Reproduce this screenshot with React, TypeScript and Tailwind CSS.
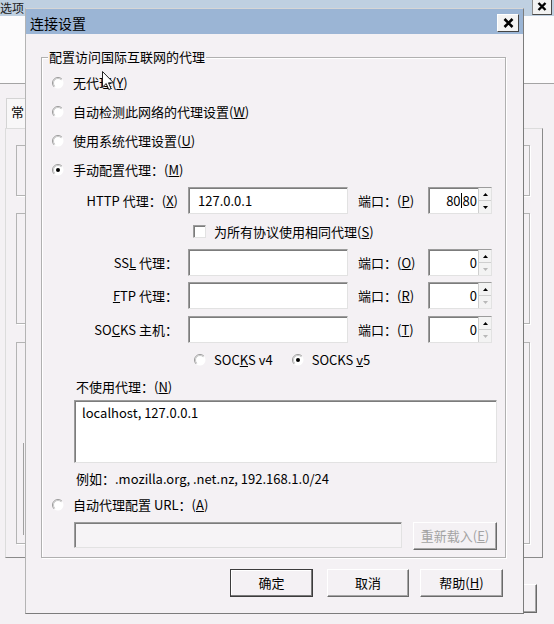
import React from 'react';

// Windows-classic style "连接设置" dialog over the "选项" window

const FONT = "font-['Noto_Sans_CJK_SC','Noto_Sans',sans-serif]";
const SUNKEN =
  'border border-t-[#9c9c9c] border-l-[#9c9c9c] border-r-[#e2e2e2] border-b-[#e2e2e2] shadow-[inset_1px_1px_0_#7c7c7c]';
const RAISED =
  'border border-t-[#ffffff] border-l-[#ffffff] border-r-[#6a6a6a] border-b-[#6a6a6a] shadow-[inset_-1px_-1px_0_#a6a6a6]';

function Radio({ checked }: { checked?: boolean }) {
  return (
    <svg width="12" height="12" viewBox="0 0 12 12" className="shrink-0">
      <circle cx="6" cy="6" r="5.5" fill="#ffffff" />
      <path d="M2.1 9.9 A5.5 5.5 0 0 1 9.9 2.1" stroke="#9a9a9a" strokeWidth="1" fill="none" />
      <path d="M2.8 9.2 A4.5 4.5 0 0 1 9.2 2.8" stroke="#c8c8c8" strokeWidth="1" fill="none" />
      {checked && <circle cx="6" cy="6" r="2" fill="#000000" />}
    </svg>
  );
}

function Checkbox() {
  return <span className={`inline-block w-[13px] h-[13px] bg-white ${SUNKEN} shrink-0`} />;
}

function Arrow({ up, gray }: { up?: boolean; gray?: boolean }) {
  return (
    <svg width="5" height="3" viewBox="0 0 5 3">
      <path d={up ? 'M0 3 L2.5 0 L5 3 Z' : 'M0 0 L2.5 3 L5 0 Z'} fill={gray ? '#b8b8b8' : '#000000'} />
    </svg>
  );
}

function Spin({ children, downGray }: { children: React.ReactNode; downGray?: boolean }) {
  return (
    <div className={`flex w-[64px] h-[27px] bg-white ${SUNKEN}`}>
      <div className="flex-1 flex items-center justify-end pr-[1px] leading-[16px]">{children}</div>
      <div className="flex flex-col w-[13px] border-l border-[#cfcfcf]">
        <div className="flex-1 flex items-center justify-center bg-[#f3f3f3] border-b border-[#cfcfcf]">
          <Arrow up />
        </div>
        <div className="flex-1 flex items-center justify-center bg-[#f3f3f3]">
          <Arrow gray={downGray} />
        </div>
      </div>
    </div>
  );
}

function ProxyRow({
  label,
  value,
  port,
  spin,
  className,
}: {
  label: React.ReactNode;
  value?: string;
  port: React.ReactNode;
  spin: React.ReactNode;
  className?: string;
}) {
  return (
    <div className={`flex items-center h-[27px] ${className ?? ''}`}>
      <div className="w-[136px] text-right leading-[16px]">{label}</div>
      <div className={`ml-[10px] w-[160px] h-[27px] bg-white flex items-center pl-[9px] leading-[16px] ${SUNKEN}`}>
        {value}
      </div>
      <div className="ml-[10px] w-[60px] leading-[16px]">{port}</div>
      <div className="ml-[10px]">{spin}</div>
    </div>
  );
}

function Button({ children, isDefault, className }: { children: React.ReactNode; isDefault?: boolean; className?: string }) {
  return (
    <div
      className={`h-[28px] flex items-center justify-center leading-[16px] bg-[#f4f1f4] ${
        isDefault
          ? 'border border-[#3c3c3c] shadow-[inset_-1px_-1px_0_#7a7a7a,inset_1px_1px_0_#ffffff]'
          : RAISED
      } ${className ?? ''}`}
    >
      {children}
    </div>
  );
}

export default function App() {
  return (
    <div className={`relative w-[554px] h-[624px] overflow-hidden bg-[#f4f1f4] text-[13px] text-black ${FONT}`}>
      {/* background window: 选项 */}
      <div className="absolute left-0 top-0 w-[554px] h-[16px] bg-[#bfd0e1]" />
      <span className="absolute left-0 top-[1px] text-[12px] leading-[14px] text-[#1a1a1a]">选项</span>
      <div className="absolute left-[532px] top-[-3px] w-[20px] h-[18px] bg-[#f2f2f2] border border-[#8c8c8c] border-r-[#4a4a4a] border-b-[#4a4a4a] flex items-center justify-center">
        <svg width="10" height="9" viewBox="0 0 10 9">
          <path d="M1.5 1 L8.5 8 M8.5 1 L1.5 8" stroke="#000" strokeWidth="2.4" />
        </svg>
      </div>
      <div className="absolute left-0 top-[16px] w-[554px] h-[68px] bg-[#fcfbfc] border-b border-[#a4a4a4]" />
      <div className="absolute left-[6px] top-[98px] w-[40px] h-[31px] border-l border-t border-[#d4d4d4] bg-[#f8f7f8]" />
      <span className="absolute left-[11px] top-[103px] leading-[18px]">常</span>
      <div className="absolute left-[5px] top-[128px] w-[538px] h-[430px] border border-[#dcdcdc] border-r-[#8a8a8a] border-b-[#8a8a8a]" />
      <div className="absolute left-[16px] top-[145px] w-[514px] h-[51px] border border-[#b4b4b4] shadow-[1px_1px_0_#ffffff]" />
      <div className="absolute left-[16px] top-[213px] w-[514px] h-[111px] border border-[#b4b4b4] shadow-[1px_1px_0_#ffffff]" />
      <div className="absolute left-[16px] top-[342px] w-[514px] h-[202px] border border-[#b4b4b4] shadow-[1px_1px_0_#ffffff]" />
      <div className="absolute left-[23px] top-[443px] w-px h-[92px] bg-[#a0a0a0]" />
      <div className={`absolute left-[440px] top-[584px] w-[97px] h-[29px] ${RAISED}`} />

      {/* dialog: 连接设置 */}
      <div className="absolute left-[25px] top-[8px] w-[499px] h-[606px] flex flex-col bg-[#f4f1f4] border border-t-[#d6d6d6] border-l-[#b4b4b4] border-r-[#7c7c7c] border-b-[#7c7c7c]">
        <div className="h-[25px] shrink-0 bg-[#9bb5d5] flex items-center justify-between pt-[2px] pl-[4px] pr-[4px]">
          <span className="text-[14px] leading-[18px]">连接设置</span>
          <div className="w-[22px] h-[18px] bg-[#f3f3f3] border border-t-[#ffffff] border-l-[#ffffff] border-r-[#444444] border-b-[#444444] flex items-center justify-center">
            <svg width="11" height="10" viewBox="0 0 11 10">
              <path d="M1.5 1 L9.5 9 M9.5 1 L1.5 9" stroke="#000" strokeWidth="2.6" />
            </svg>
          </div>
        </div>

        <div className="relative ml-[15px] mt-[23px] w-[465px] h-[501px] shrink-0 border border-[#b0b0b0] shadow-[inset_1px_1px_0_#ffffff,1px_1px_0_#ffffff] flex flex-col pt-[10px]">
          <span className="absolute left-[6px] top-[-9px] px-[1px] bg-[#f4f1f4] leading-[16px]">配置访问国际互联网的代理</span>

          <div className="flex items-center h-[29px] pl-[10px] gap-[9px] leading-[16px]">
            <Radio />
            <span>
              无代理(<u>Y</u>)
            </span>
          </div>
          <div className="flex items-center h-[29px] pl-[10px] gap-[9px] leading-[16px]">
            <Radio />
            <span>
              自动检测此网络的代理设置(<u>W</u>)
            </span>
          </div>
          <div className="flex items-center h-[29px] pl-[10px] gap-[9px] leading-[16px]">
            <Radio />
            <span>
              使用系统代理设置(<u>U</u>)
            </span>
          </div>
          <div className="flex items-center h-[29px] pl-[10px] gap-[9px] leading-[16px]">
            <Radio checked />
            <span>
              手动配置代理：(<u>M</u>)
            </span>
          </div>

          <ProxyRow
            className="mt-[3px]"
            label={
              <>
                HTTP 代理：(<u>X</u>)
              </>
            }
            value="127.0.0.1"
            port={
              <>
                端口：(<u>P</u>)
              </>
            }
            spin={
              <Spin>
                80
                <span className="inline-block w-px h-[15px] bg-black mx-[0.5px]" />
                80
              </Spin>
            }
          />

          <div className="flex items-center h-[35px] pl-[151px] gap-[8px] leading-[16px]">
            <Checkbox />
            <span>
              为所有协议使用相同代理(<u>S</u>)
            </span>
          </div>

          <ProxyRow
            label={
              <>
                SS<u>L</u> 代理：
              </>
            }
            port={
              <>
                端口：(<u>O</u>)
              </>
            }
            spin={<Spin downGray>0</Spin>}
          />
          <ProxyRow
            className="mt-[6px]"
            label={
              <>
                <u>F</u>TP 代理：
              </>
            }
            port={
              <>
                端口：(<u>R</u>)
              </>
            }
            spin={<Spin downGray>0</Spin>}
          />
          <ProxyRow
            className="mt-[7px]"
            label={
              <>
                SO<u>C</u>KS 主机：
              </>
            }
            port={
              <>
                端口：(<u>T</u>)
              </>
            }
            spin={<Spin downGray>0</Spin>}
          />

          <div className="flex items-center h-[34px] pl-[152px] leading-[16px]">
            <Radio />
            <span className="ml-[8px]">
              SOC<u>K</u>S v4
            </span>
            <span className="ml-[19px]">
              <Radio checked />
            </span>
            <span className="ml-[8px]">
              SOCKS <u>v</u>5
            </span>
          </div>

          <div className="flex items-center h-[20px] pl-[34px] leading-[16px]">
            不使用代理：(<u>N</u>)
          </div>
          <div className={`mt-[3px] ml-[32px] w-[423px] h-[63px] bg-white pl-[7px] pt-[4px] leading-[16px] ${SUNKEN}`}>
            localhost, 127.0.0.1
          </div>

          <div className="flex items-center h-[32px] pl-[34px] leading-[16px]">
            例如：.mozilla.org, .net.nz, 192.168.1.0/24
          </div>
          <div className="flex items-center h-[20px] pl-[10px] gap-[9px] leading-[16px]">
            <Radio />
            <span>
              自动代理配置 URL：(<u>A</u>)
            </span>
          </div>
          <div className="flex items-start mt-[7px] ml-[32px]">
            <div className={`w-[328px] h-[26px] bg-[#f6f4f6] ${SUNKEN}`} />
            <Button className="ml-[11px] w-[84px] text-[#a3a3a3]">
              重新载入(<u>E</u>)
            </Button>
          </div>
        </div>

        <div className="flex mt-[11px] ml-[204px]">
          <Button isDefault className="w-[83px]">
            确定
          </Button>
          <Button className="ml-[14px] w-[82px]">取消</Button>
          <Button className="ml-[11px] w-[83px]">
            帮助(<u>H</u>)
          </Button>
        </div>
      </div>

      {/* mouse pointer */}
      <svg className="absolute left-[102px] top-[71px]" width="13" height="20" viewBox="0 0 13 20">
        <path
          d="M0.5 0.5 L0.5 16 L4.2 12.6 L6.8 18.6 L9 17.6 L6.5 11.8 L11.5 11.8 Z"
          fill="#ffffff"
          stroke="#222222"
          strokeWidth="1"
          strokeLinejoin="round"
        />
      </svg>
    </div>
  );
}
